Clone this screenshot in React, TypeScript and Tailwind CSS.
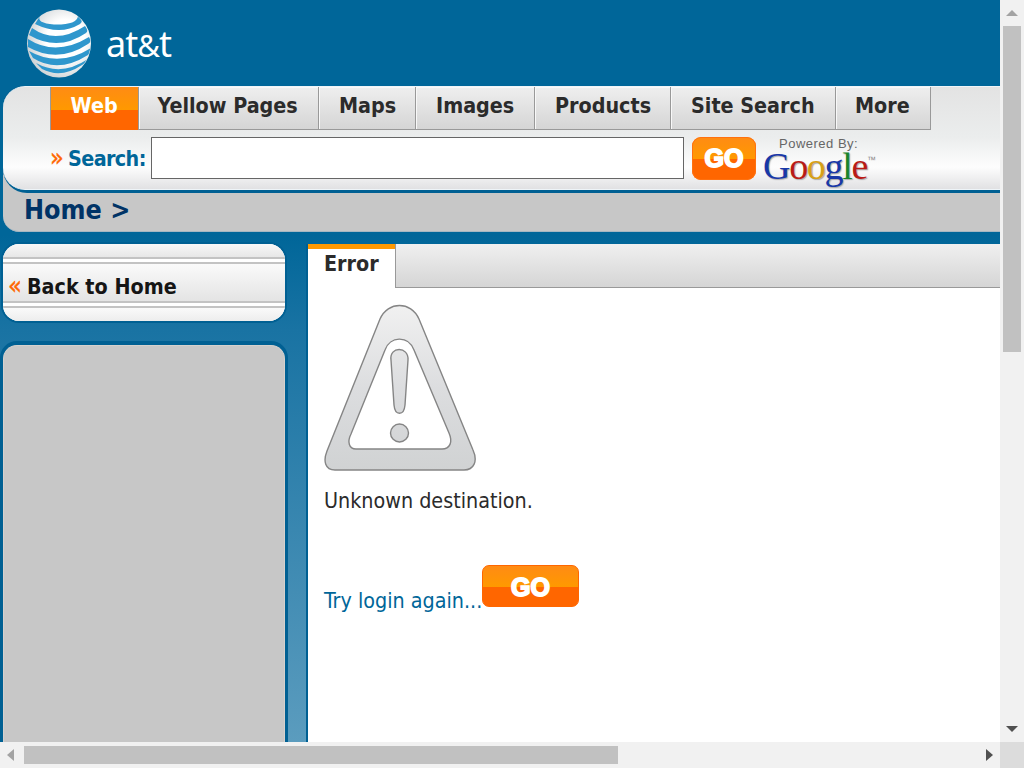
import React from "react";

const tabs = [
  { label: "Yellow Pages", box: "w-[180px] pl-[18.5px]" },
  { label: "Maps", box: "w-[97px] pl-[20px]" },
  { label: "Images", box: "w-[119px] pl-[20px]" },
  { label: "Products", box: "w-[136px] pl-[20px]" },
  { label: "Site Search", box: "w-[165px] pl-[20px]" },
  { label: "More", box: "w-[95px] pl-[19px]" },
];

function Globe() {
  return (
    <svg width="66" height="70" viewBox="0 0 66 70" className="block">
      <defs>
        <clipPath id="globe"><ellipse cx="33" cy="34.5" rx="31.5" ry="33.5" /></clipPath>
        <radialGradient id="shine" cx="0.6" cy="0.45" r="0.6">
          <stop offset="0.5" stopColor="#fff" />
          <stop offset="1" stopColor="#d0d4d6" />
        </radialGradient>
      </defs>
      <ellipse cx="33" cy="34.5" rx="32" ry="34" fill="url(#shine)" />
      <g clipPath="url(#globe)" fill="#2f97cd">
        <path d="M14 7Q10 14 28 15.5Q51 16 52 7Q58 12 54 15Q34 27 9 15Z" />
        <path d="M6 19Q30 36 59 17Q63 22 60 24Q32 43 3 26Z" />
        <path d="M2 30Q30 48 63 28Q66 33 62 35Q32 55 2 38Z" />
        <path d="M3 42Q33 59 65 39Q65 44 62 46Q32 65 7 49Z" />
        <path d="M10 54Q35 68 62 50Q60 54 56 56Q35 70 16 60Z" />
      </g>
    </svg>
  );
}

function Warning() {
  return (
    <svg width="154" height="168" viewBox="0 0 154 168" className="block">
      <defs>
        <linearGradient id="silver" x1="0" y1="0" x2="0" y2="168" gradientUnits="userSpaceOnUse">
          <stop offset="0" stopColor="#f1f1f1" />
          <stop offset="0.5" stopColor="#dcdddf" />
          <stop offset="1" stopColor="#d0d2d3" />
        </linearGradient>
      </defs>
      <g stroke="#858585" strokeWidth="1.4">
        <path fill="url(#silver)" d="M56 15C64 -3 87 -3 95 15L149 146C154 157 150 166 140 166H11C1 166 -1 157 3 147Z" />
        <path fill="white" d="M61 46C66 32 84 31 90 46L125 129C129 138 126 145 118 145H32C25 145 23 138 27 130Z" />
        <path fill="url(#silver)" d="M67 56C65 42 85 42 84 56L81 101C80 112 71 112 70 101Z" />
        <circle cx="75.5" cy="129" r="9" fill="url(#silver)" />
      </g>
    </svg>
  );
}

function GoLabel() {
  return <span className="font-['Liberation_Sans',sans-serif] text-[25px] leading-[43px] font-bold text-white [-webkit-text-stroke:1.8px_white]">GO</span>;
}

export default function App() {
  return (
    <div className="grid h-[768px] w-[1024px] grid-cols-[1000px_24px] grid-rows-[742px_26px] overflow-hidden bg-[#f0f0f0] font-['DejaVu_Sans_Condensed','DejaVu_Sans',sans-serif] text-[21.33px] whitespace-nowrap text-[#2b2b2b]">
      <div className="flex flex-col overflow-hidden bg-[linear-gradient(#006699_0px,#006699_235px,#1973a3_330px,#5b9cbe_742px)]">
        <header className="flex h-[86px] shrink-0 items-start pt-[9px] pl-[26px]">
          <Globe />
          <span className="mt-[14px] ml-[14px] font-['Noto_Sans',sans-serif] text-[36px] leading-[42px] tracking-[-1px] text-white">at<span className="text-[31px]">&amp;</span>t</span>
        </header>

        <div className="ml-[3px] h-[146px] shrink-0 rounded-tl-[24px] rounded-bl-[16px] border-b border-[#a5b7c2] bg-[#c7c7c7]">
          <div className="h-[107px] rounded-l-[24px] rounded-tl-[20px] bg-[#006093] pb-[3px]">
            <section className="h-[104px] rounded-l-[22px] border-t border-b border-[#eef4f8] bg-[linear-gradient(#e3e3e3_0px,#ebeded_50px,#fdfdfd_80px,#e0e0e2_103px)]">
              <nav className="ml-[47px] flex h-[43px] w-[881px] border-r border-b border-[#999] font-bold">
                <a className="h-[43px] w-[88px] shrink-0 border-l border-[#999] bg-[linear-gradient(#ff8b14_0px,#ff9900_23px,#ff6600_23px)] pl-[19.5px] leading-[38px] text-white">Web</a>
                {tabs.map((tab) => (
                  <a key={tab.label} className={`${tab.box} h-[42px] shrink-0 border-l border-[#999] bg-linear-to-b from-[#efefef] to-[#d5d5d5] leading-[38px] shadow-[inset_1px_1px_0_#f8f8f8]`}>{tab.label}</a>
                ))}
              </nav>
              <form className="mt-[7px] ml-[47px] flex h-[54px]" onSubmit={(e) => e.preventDefault()}>
                <span className="w-[18px] text-[25px] leading-[41px] text-[#ff6600] [-webkit-text-stroke:0.4px_#ff6600]">»</span>
                <label htmlFor="query" className="w-[83px] leading-[43px] font-bold tracking-[-0.6px] text-[#006699]">Search:</label>
                <input id="query" className="h-[42px] w-[533px] border border-[#666] bg-white px-2 outline-none" />
                <button className="ml-[8px] flex h-[43px] w-[64px] justify-center rounded-[9px] bg-[linear-gradient(#ff8b14_0px,#ff9900_22px,#ff6600_22px)] shadow-[inset_0_0_0_1px_#ff7110]"><GoLabel /></button>
                <div className="ml-[7px] flex w-[120px] flex-col">
                  <span className="h-[13px] pl-[16px] font-['Liberation_Sans',sans-serif] text-[13px] leading-[14px] tracking-[0.5px] text-[#666]">Powered By:</span>
                  <span className="flex h-[41px] font-['Liberation_Serif',serif] text-[38px] leading-[32px] tracking-[-1.3px] [text-shadow:1px_1px_1px_#aaa]">
                    <span className="text-[#1838a8]">G</span><span className="text-[#b91b16]">o</span><span className="text-[#d7a018]">o</span><span className="text-[#1838a8]">g</span><span className="text-[#19852a]">l</span><span className="text-[#b91b16]">e</span>
                    <span className="font-['Liberation_Sans',sans-serif] text-[9px] leading-[20px] tracking-normal text-[#888] [text-shadow:none]">™</span>
                  </span>
                </div>
              </form>
            </section>
          </div>
          <div className="pl-[21px] text-[26.67px] leading-[34px] font-bold text-[#003366]">Home &gt;</div>
        </div>

        <div className="mt-[12px] flex flex-1">
          <aside className="ml-[3px] w-[282px] shrink-0">
            <div className="h-[77px] overflow-hidden rounded-[16px] bg-white shadow-[0_0_0_2px_#006093]">
              <div className="h-[15px] border-b-2 border-[#c3c3c3] bg-linear-to-b from-[#f8f8f8] to-[#e7e7e7]" />
              <div className="mt-[3px] flex h-[41px] border-t-2 border-b-2 border-[#c3c3c3] bg-linear-to-b from-[#fafafa] to-[#e4e4e4] pl-[5px]">
                <span className="w-[19px] text-[25px] leading-[43px] text-[#ff6600] [-webkit-text-stroke:0.4px_#ff6600]">«</span>
                <a className="leading-[45px] font-bold text-[#151515]">Back to Home</a>
              </div>
              <div className="mt-[3px] h-[15px] border-t-2 border-[#c3c3c3] bg-linear-to-b from-[#fafafa] to-[#ededed]" />
            </div>
            <div className="-mx-[3px] mt-[20px] h-[440px] rounded-t-[17px] bg-[#006093] px-[3px] pt-[4px]">
              <div className="h-[430px] rounded-t-[14px] border-x border-t border-[#d5d1ce] bg-[#c7c7c7]" />
            </div>
          </aside>
          <main className="ml-[21px] flex flex-1 flex-col border-l-2 border-[#006093] bg-white">
            <div className="flex h-[44px]">
              <div className="w-[87px] border-t-[5px] border-[#ff9900] pl-[16px] leading-[29px] font-bold">Error</div>
              <div className="flex-1 border-b border-l border-[#999] bg-linear-to-b from-[#f0f0f0] to-[#d5d5d5]" />
            </div>
            <div className="pt-[16px] pl-[16px]">
              <Warning />
              <p className="mt-[17px] h-[24px] leading-[24px]">Unknown destination.</p>
              <div className="mt-[52px] flex h-[50px]">
                <a className="w-[158px] pt-[24px] leading-[24px] text-[#006699]">Try login again...</a>
                <button className="flex h-[42px] w-[97px] justify-center rounded-[7px] border border-[#ff6600] bg-[linear-gradient(#ff8b14_0px,#ff9900_21px,#ff6600_21px)]"><GoLabel /></button>
              </div>
            </div>
          </main>
        </div>
      </div>
      <div className="flex flex-col items-center bg-[#f1f1f1]">
        <div className="flex h-[26px] items-center"><svg width="12" height="8"><path d="M0 7L6 1L12 7Z" fill="#a3a3a3" /></svg></div>
        <div className="h-[326px] w-[18px] bg-[#c1c1c1]" />
        <div className="mt-auto flex h-[26px] items-center"><svg width="12" height="8"><path d="M0 1L6 7L12 1Z" fill="#505050" /></svg></div>
      </div>
      <div className="flex items-center bg-[#f1f1f1]">
        <svg width="24" height="12"><path d="M14 0L7 6L14 12Z" fill="#a3a3a3" /></svg>
        <div className="h-[18px] w-[594px] bg-[#c1c1c1]" />
        <svg width="24" height="12" className="ml-auto"><path d="M10 0L17 6L10 12Z" fill="#505050" /></svg>
      </div>
      <div className="bg-[#dcdcdc]" />
    </div>
  );
}
